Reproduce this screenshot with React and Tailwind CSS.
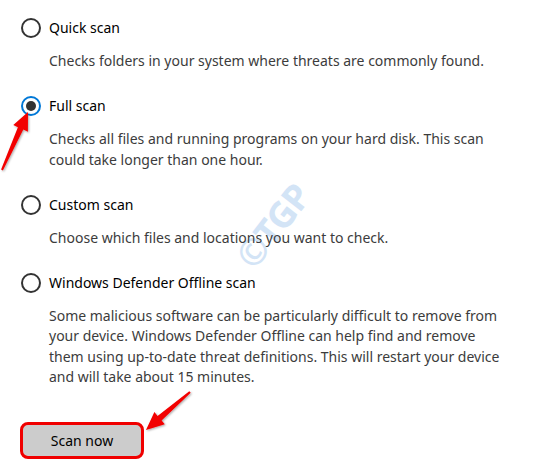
import React, { useState } from 'react';

const OPCIONES = [
  {
    id: 'quick',
    titulo: 'Quick scan',
    lineas: ['Checks folders in your system where threats are commonly found.'],
  },
  {
    id: 'full',
    titulo: 'Full scan',
    lineas: [
      'Checks all files and running programs on your hard disk. This scan',
      'could take longer than one hour.',
    ],
  },
  {
    id: 'custom',
    titulo: 'Custom scan',
    lineas: ['Choose which files and locations you want to check.'],
  },
  {
    id: 'offline',
    titulo: 'Windows Defender Offline scan',
    lineas: [
      'Some malicious software can be particularly difficult to remove from',
      'your device. Windows Defender Offline can help find and remove',
      'them using up-to-date threat definitions. This will restart your device',
      'and will take about 15 minutes.',
    ],
  },
];

function Radio({ checked }) {
  return (
    <span
      className={`flex items-center justify-center w-[20px] h-[20px] rounded-full border-2 shrink-0 ${
        checked ? 'border-[#0078d7]' : 'border-[#333333]'
      }`}
    >
      {checked && <span className="w-[10px] h-[10px] rounded-full bg-[#333333]" />}
    </span>
  );
}

function Flechas() {
  return (
    <svg className="absolute inset-0 pointer-events-none" width="545" height="475">
      <defs>
        <filter id="sombra" x="-20%" y="-20%" width="140%" height="140%">
          <feDropShadow dx="1" dy="1" stdDeviation="1" floodColor="#000" floodOpacity="0.35" />
        </filter>
      </defs>
      <polygon
        filter="url(#sombra)"
        fill="#f20000"
        points="28,112 27.9,131.7 23.3,129.6 2.9,170.4 1.1,169.6 17.9,127.2 13.3,125.1"
      />
      <polygon
        filter="url(#sombra)"
        fill="#f20000"
        points="146,430 164.8,424.3 161.6,420.5 190.7,392.8 189.3,391.2 157.6,415.9 154.4,412.1"
      />
    </svg>
  );
}

export default function App() {
  const [seleccion, setSeleccion] = useState('full');

  return (
    <div
      className="relative w-[545px] h-[475px] bg-white overflow-hidden"
      style={{ fontFamily: '"Segoe UI", "Noto Sans", sans-serif' }}
    >
      {/* marca de agua */}
      <div className="absolute left-[218px] top-[201px] w-[110px] h-[50px] flex items-center justify-center -rotate-[52deg] select-none">
        <span className="text-[36px] font-bold text-[#d3e4f6] leading-none tracking-[-1px]">©TGP</span>
      </div>

      <div className="relative flex flex-col pl-[21px] pt-[18px] gap-[24.5px]">
        {OPCIONES.map((op) => (
          <div key={op.id} className="flex flex-col gap-[13px]">
            <label
              className="flex items-center gap-[8px] h-[20px] cursor-pointer"
              onClick={() => setSeleccion(op.id)}
            >
              <Radio checked={seleccion === op.id} />
              <span className="text-[14px] text-[#000000] leading-[20px]">{op.titulo}</span>
            </label>
            <div className="pl-[28px] text-[14px] leading-[20.5px] text-[#3c3c3c]">
              {op.lineas.map((l, i) => (
                <div key={i} className="whitespace-nowrap">{l}</div>
              ))}
            </div>
          </div>
        ))}

        <div className="mt-[10px] -ml-[1px]">
          <button className="w-[124px] h-[37px] rounded-[8px] border-[3px] border-[#f00000] bg-[#cccccc] text-[14px] text-[#000000] leading-none">
            Scan now
          </button>
        </div>
      </div>

      <Flechas />
    </div>
  );
}
